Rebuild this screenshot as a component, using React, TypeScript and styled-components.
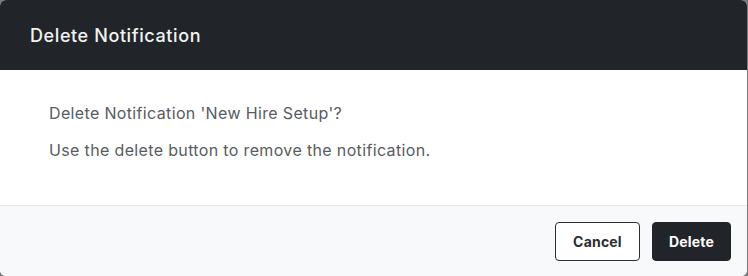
import styled, { createGlobalStyle } from "styled-components";

const GlobalStyle = createGlobalStyle`
    html, body {
        margin: 0;
        padding: 0;
        background: #7a7b7d;
    }
    body {
        font-family: Inter, "Noto Sans", sans-serif;
    }
`;

const Modal = styled.div`
    width: 747px;
    height: 276px;
    display: flex;
    flex-direction: column;
    background: #fff;
    border-radius: 6px;
    overflow: hidden;
`;

const Header = styled.header`
    height: 70px;
    display: flex;
    align-items: center;
    padding: 0 30px;
    background: #212529;
    flex-shrink: 0;
`;

const Title = styled.h2`
    margin: 0;
    font-size: 18px;
    font-weight: 500;
    color: #f1f2f3;
    letter-spacing: 0.6px;
`;

const Body = styled.div`
    flex: 1;
    display: flex;
    flex-direction: column;
    gap: 17px;
    padding: 33px 49px 0;
`;

const Text = styled.p`
    margin: 0;
    font-size: 16px;
    line-height: 20px;
    color: #585b5f;
    letter-spacing: 0.35px;
`;

const Footer = styled.footer`
    height: 70px;
    display: flex;
    align-items: center;
    justify-content: flex-end;
    gap: 12px;
    padding: 0 16px;
    background: #f8f9fa;
    border-top: 1px solid #e1e3e5;
    flex-shrink: 0;
`;

const Button = styled.button<{ $primary?: boolean }>`
    height: 39px;
    padding: 0 ${(p) => (p.$primary ? "16px" : "17px")};
    border-radius: 4px;
    font-family: inherit;
    font-size: 14px;
    font-weight: 700;
    letter-spacing: 0.2px;
    cursor: pointer;
    border: 1px solid ${(p) => (p.$primary ? "#212529" : "#2b2e33")};
    background: ${(p) => (p.$primary ? "#212529" : "#fff")};
    color: ${(p) => (p.$primary ? "#fff" : "#2b2e33")};
`;

function App() {
    return (
        <>
            <GlobalStyle />
            <Modal>
                <Header>
                    <Title>Delete Notification</Title>
                </Header>
                <Body>
                    <Text>Delete Notification 'New Hire Setup'?</Text>
                    <Text>Use the delete button to remove the notification.</Text>
                </Body>
                <Footer>
                    <Button>Cancel</Button>
                    <Button $primary>Delete</Button>
                </Footer>
            </Modal>
        </>
    );
}

export default App;
